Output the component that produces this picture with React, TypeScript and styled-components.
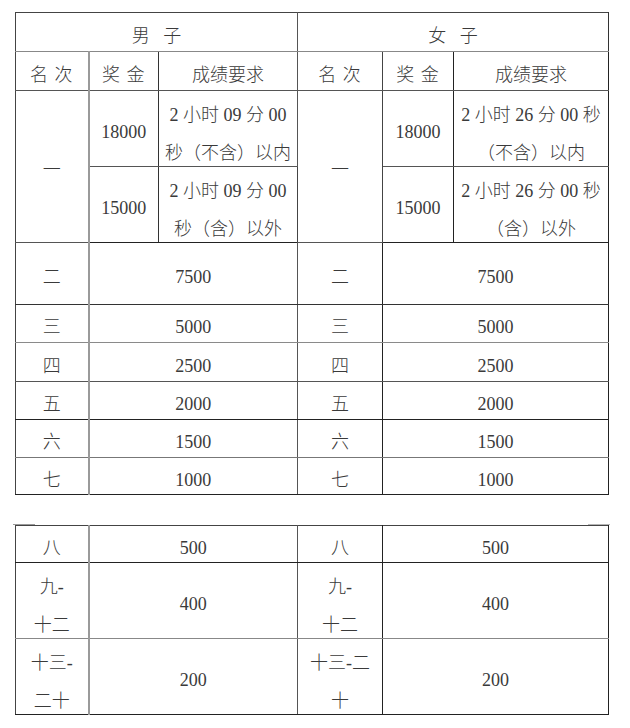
import React from 'react';
import styled, { createGlobalStyle } from 'styled-components';

const PageStyle = createGlobalStyle`
  body {
    margin: 0;
    background: #fff;
  }
`;

const Wrapper = styled.div`
  padding: 12px 0 0 15px;
  font-family: 'Liberation Serif', 'Noto Sans CJK SC', serif;
  font-weight: 300;
  color: #3a3a3a;
`;

const TableStyled = styled.table<{ $gap?: number }>`
  position: relative;
  border-collapse: collapse;
  table-layout: fixed;
  width: 593px;
  margin-top: ${(p) => p.$gap ?? 0}px;
`;

const TableFrame = styled.div`
  position: relative;
  /* little stubs Word leaves at the top corners of a split table */
  &::before,
  &::after {
    content: '';
    position: absolute;
    top: -1px;
    height: 1px;
    background: #9a9a9a;
  }
  &::before {
    left: -2px;
    width: 22px;
  }
  &::after {
    left: 573px;
    width: 22px;
    background: #b5b5b5;
  }
`;

const Row = styled.tr<{ $h: number; $line?: string }>`
  height: ${(p) => p.$h}px;
  & > td {
    border-bottom-color: ${(p) => p.$line ?? '#444'};
  }
`;

const Cell = styled.td<{ $right?: string; $rw?: number }>`
  border: 1px solid #444;
  border-right: ${(p) => p.$rw ?? 1}px solid ${(p) => p.$right ?? '#444'};
  text-align: center;
  vertical-align: middle;
  padding: 9px 0 0 0;
  font-size: 18px;
  line-height: 1.2;
  white-space: nowrap;
  overflow: visible;
`;

const TwoLines = styled.div`
  height: 75px;
  box-sizing: border-box;
  padding-top: 5px;
  line-height: 38px;
  margin-top: -9px;
`;

const Spaced = styled.span`
  letter-spacing: 1px;
`;

const GRAY = '#9a9a9a';

const men = { top: '2 小时 09 分 00', inner: '秒（不含）以内', outer: '秒（含）以外' };
const women = { top: '2 小时 26 分 00 秒', inner: '（不含）以内', outer: '（含）以外' };

const simpleRows = [
  { rank: '二', prize: '7500', h: 62, line: '#333' },
  { rank: '三', prize: '5000', h: 38, line: '#8a8a8a' },
  { rank: '四', prize: '2500', h: 39, line: '#555' },
  { rank: '五', prize: '2000', h: 38, line: '#222' },
  { rank: '六', prize: '1500', h: 38, line: '#777' },
  { rank: '七', prize: '1000', h: 37, line: '#222' },
];

function App() {
  return (
    <Wrapper>
      <PageStyle />
      <TableStyled>
        <colgroup>
          <col style={{ width: 73 }} />
          <col style={{ width: 70 }} />
          <col style={{ width: 139 }} />
          <col style={{ width: 85 }} />
          <col style={{ width: 71 }} />
          <col style={{ width: 155 }} />
        </colgroup>
        <tbody>
          <Row $h={39} $line="#888">
            <Cell colSpan={3} $right="#555">男{'\u00a0\u00a0\u00a0'}子</Cell>
            <Cell colSpan={3} $right="#333">女{'\u00a0\u00a0\u00a0'}子</Cell>
          </Row>
          <Row $h={39} $line="#555">
            <Cell $right={GRAY} $rw={2}><Spaced>名 次</Spaced></Cell>
            <Cell $right="#333"><Spaced>奖 金</Spaced></Cell>
            <Cell $right="#555">成绩要求</Cell>
            <Cell><Spaced>名 次</Spaced></Cell>
            <Cell $right="#222"><Spaced>奖 金</Spaced></Cell>
            <Cell $right="#222">成绩要求</Cell>
          </Row>
          <Row $h={75} $line="#555">
            <Cell rowSpan={2} $right={GRAY} $rw={2}>一</Cell>
            <Cell $right="#333">18000</Cell>
            <Cell $right="#555">
              <TwoLines>{men.top}<br />{men.inner}</TwoLines>
            </Cell>
            <Cell rowSpan={2}>一</Cell>
            <Cell $right="#222">18000</Cell>
            <Cell $right="#222">
              <TwoLines>{women.top}<br />{women.inner}</TwoLines>
            </Cell>
          </Row>
          <Row $h={76} $line="#222">
            <Cell $right="#333">15000</Cell>
            <Cell $right="#555">
              <TwoLines>{men.top}<br />{men.outer}</TwoLines>
            </Cell>
            <Cell $right="#222">15000</Cell>
            <Cell $right="#222">
              <TwoLines>{women.top}<br />{women.outer}</TwoLines>
            </Cell>
          </Row>
          {simpleRows.map((r) => (
            <Row key={r.rank} $h={r.h} $line={r.line}>
              <Cell $right={GRAY} $rw={2}>{r.rank}</Cell>
              <Cell colSpan={2} $right="#555">{r.prize}</Cell>
              <Cell $right="#222">{r.rank}</Cell>
              <Cell colSpan={2} $right="#222">{r.prize}</Cell>
            </Row>
          ))}
        </tbody>
      </TableStyled>

      <TableFrame style={{ marginTop: 30 }}>
        <TableStyled>
          <colgroup>
            <col style={{ width: 73 }} />
            <col style={{ width: 209 }} />
            <col style={{ width: 85 }} />
            <col style={{ width: 226 }} />
          </colgroup>
          <tbody>
            <Row $h={37} $line="#222">
              <Cell $right={GRAY} $rw={2}>八</Cell>
              <Cell $right="#555">500</Cell>
              <Cell $right="#222">八</Cell>
              <Cell $right="#222">500</Cell>
            </Row>
            <Row $h={75} $line="#888">
              <Cell $right={GRAY} $rw={2}>
                <TwoLines>九-<br />十二</TwoLines>
              </Cell>
              <Cell $right="#555">400</Cell>
              <Cell $right="#222">
                <TwoLines>九-<br />十二</TwoLines>
              </Cell>
              <Cell $right="#222">400</Cell>
            </Row>
            <Row $h={75} $line="#222">
              <Cell $right={GRAY} $rw={2}>
                <TwoLines>十三-<br />二十</TwoLines>
              </Cell>
              <Cell $right="#555">200</Cell>
              <Cell $right="#222">
                <TwoLines>十三-二<br />十</TwoLines>
              </Cell>
              <Cell $right="#222">200</Cell>
            </Row>
          </tbody>
        </TableStyled>
      </TableFrame>
    </Wrapper>
  );
}

export default App;
